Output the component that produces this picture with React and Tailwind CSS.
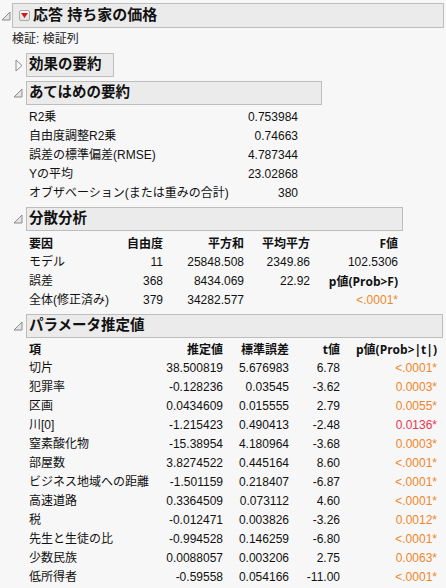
import React from "react";

const FONT = { fontFamily: "'Liberation Sans', 'Noto Sans CJK JP', sans-serif" };
const BOLD_FONT = { fontFamily: "'Open Sans', 'Noto Sans CJK JP', sans-serif" };

function Tri({ open }) {
  if (open) {
    return (
      <svg width="10" height="10" viewBox="0 0 10 10">
        <path d="M1 9 L9 1 L9 9 Z" fill="#e4e4e4" stroke="#8c8c8c" strokeWidth="1" />
      </svg>
    );
  }
  return (
    <svg width="8" height="13" viewBox="0 0 8 13">
      <path d="M1 1 L7 6.5 L1 12 Z" fill="#f7f7f7" stroke="#8c8c8c" strokeWidth="1" />
    </svg>
  );
}

function RedButton() {
  return (
    <div className="w-[11px] h-[11px] rounded-[2px] border border-[#a9a9a9] bg-gradient-to-b from-[#fdfdfd] to-[#dedede] flex items-center justify-center mr-[3px]">
      <svg width="7" height="5" viewBox="0 0 7 5">
        <path d="M0 0 L7 0 L3.5 5 Z" fill="#d8141c" />
      </svg>
    </div>
  );
}

function SectionHead({ title, open = true, width }) {
  return (
    <div className="flex items-center mt-[4px]">
      <div className="w-[14px] flex justify-end pr-[3px]">
        <Tri open={open} />
      </div>
      <div
        className={`${width} h-[24px] border border-[#bdbdbd] bg-[#ebebeb] flex items-center pl-[2px] text-[14.5px] font-bold`}
      >
        {title}
      </div>
    </div>
  );
}

const fitRows = [
  ["R2乗", "0.753984"],
  ["自由度調整R2乗", "0.74663"],
  ["誤差の標準偏差(RMSE)", "4.787344"],
  ["Yの平均", "23.02868"],
  ["オブザベーション(または重みの合計)", "380"],
];

const params = [
  ["切片", "38.500819", "5.676983", "6.78", "<.0001*"],
  ["犯罪率", "-0.128236", "0.03545", "-3.62", "0.0003*"],
  ["区画", "0.0434609", "0.015555", "2.79", "0.0055*"],
  ["川[0]", "-1.215423", "0.490413", "-2.48", "0.0136*", true],
  ["窒素酸化物", "-15.38954", "4.180964", "-3.68", "0.0003*"],
  ["部屋数", "3.8274522", "0.445164", "8.60", "<.0001*"],
  ["ビジネス地域への距離", "-1.501159", "0.218407", "-6.87", "<.0001*"],
  ["高速道路", "0.3364509", "0.073112", "4.60", "<.0001*"],
  ["税", "-0.012471", "0.003826", "-3.26", "0.0012*"],
  ["先生と生徒の比", "-0.994528", "0.146259", "-6.80", "<.0001*"],
  ["少数民族", "0.0088057", "0.003206", "2.75", "0.0063*"],
  ["低所得者", "-0.59558", "0.054166", "-11.00", "<.0001*"],
];

export default function App() {
  return (
    <div
      className="w-[446px] h-[588px] bg-[#f7f7f7] text-[12px] text-[#111] overflow-hidden pt-[3px]"
      style={FONT}
    >
      {/* top report header */}
      <div className="flex items-center">
        <div className="w-[12px] flex justify-center">
          <Tri open />
        </div>
        <div className="w-[432px] h-[25px] border border-[#bdbdbd] bg-[#ebebeb] flex items-center pl-[6px] text-[15px] font-bold">
          <RedButton />
          応答 持ち家の価格
        </div>
      </div>

      <div className="pl-[12px]">
        <div className="h-[20px] leading-[20px] mt-[1px] text-[#222]">検証: 検証列</div>

        <div className="mt-[1px]">
          <SectionHead title="効果の要約" open={false} width="w-[88px]" />
        </div>

        {/* fit summary */}
        <SectionHead title="あてはめの要約" width="w-[296px]" />
        <div className="pl-[17px] mt-[3px]">
          {fitRows.map(([k, v]) => (
            <div key={k} className="grid grid-cols-[200px_69px] h-[19px] leading-[19px]">
              <span className="whitespace-nowrap">{k}</span>
              <span className="text-right">{v}</span>
            </div>
          ))}
        </div>

        {/* ANOVA */}
        <SectionHead title="分散分析" width="w-[377px]" />
        <div className="pl-[17px] mt-[3px]">
          <div
            className="grid grid-cols-[90px_44px_81px_66px_88px] h-[19px] leading-[19px] font-bold"
            style={BOLD_FONT}
          >
            <span>要因</span>
            <span className="text-right">自由度</span>
            <span className="text-right">平方和</span>
            <span className="text-right">平均平方</span>
            <span className="text-right">F値</span>
          </div>
          <div className="grid grid-cols-[90px_44px_81px_66px_88px] h-[19px] leading-[19px]">
            <span>モデル</span>
            <span className="text-right">11</span>
            <span className="text-right">25848.508</span>
            <span className="text-right">2349.86</span>
            <span className="text-right">102.5306</span>
          </div>
          <div className="grid grid-cols-[90px_44px_81px_66px_88px] h-[19px] leading-[19px]">
            <span>誤差</span>
            <span className="text-right">368</span>
            <span className="text-right">8434.069</span>
            <span className="text-right">22.92</span>
            <span className="text-right font-bold whitespace-nowrap" style={BOLD_FONT}>
              p値(Prob&gt;F)
            </span>
          </div>
          <div className="grid grid-cols-[90px_44px_81px_66px_88px] h-[19px] leading-[19px]">
            <span className="whitespace-nowrap">全体(修正済み)</span>
            <span className="text-right">379</span>
            <span className="text-right">34282.577</span>
            <span></span>
            <span className="text-right text-[#f0862a]">&lt;.0001*</span>
          </div>
        </div>

        {/* parameter estimates */}
        <SectionHead title="パラメータ推定値" width="w-[417px]" />
        <div className="pl-[17px] mt-[2px]">
          <div
            className="grid grid-cols-[131px_63px_66px_51px_97px] h-[19px] leading-[19px] font-bold"
            style={BOLD_FONT}
          >
            <span>項</span>
            <span className="text-right">推定値</span>
            <span className="text-right">標準誤差</span>
            <span className="text-right">t値</span>
            <span className="text-right whitespace-nowrap">p値(Prob&gt;|t|)</span>
          </div>
          {params.map(([k, est, se, t, p, red]) => (
            <div key={k} className="grid grid-cols-[131px_63px_66px_51px_97px] h-[19px] leading-[19px]">
              <span className="whitespace-nowrap">{k}</span>
              <span className="text-right">{est}</span>
              <span className="text-right">{se}</span>
              <span className="text-right">{t}</span>
              <span className={`text-right ${red ? "text-[#e8364f]" : "text-[#f0862a]"}`}>{p}</span>
            </div>
          ))}
        </div>
      </div>
    </div>
  );
}
